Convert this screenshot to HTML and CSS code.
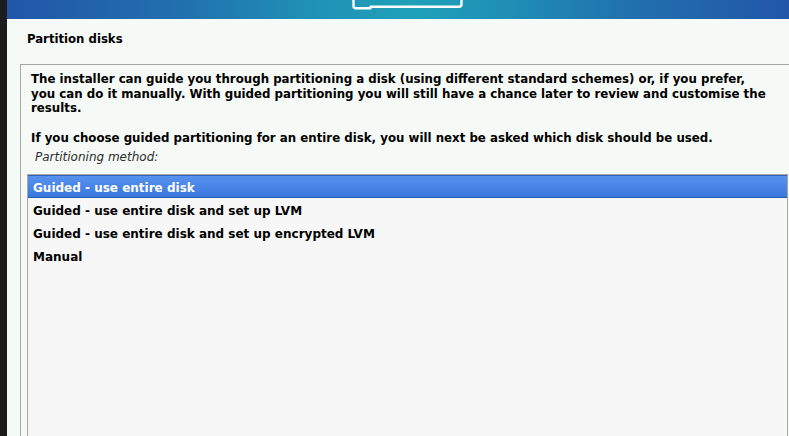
FILE: index.html
```html
<!DOCTYPE html>
<html lang="en">
<head>
<meta charset="utf-8">
<title>Partition disks</title>
<link rel="stylesheet" href="styles.css">
</head>
<body>
<div class="screen">
  <div class="strip"></div>
  <main class="installer">
    <header class="banner">
      <svg class="logo" viewBox="0 0 112 12" width="112" height="12" aria-hidden="true">
        <path d="M1.5 0 V6 Q1.5 8.2 3.7 8.2 H18.5 V6.7 H107 Q109.5 6.7 109.5 4.5 V0" fill="none" stroke="#ffffff" stroke-width="2.4" stroke-linejoin="round"/>
      </svg>
    </header>
    <h1 class="title">Partition disks</h1>
    <section class="frame">
      <div class="desc">
        <p>The installer can guide you through partitioning a disk (using different standard schemes) or, if you prefer,<br>you can do it manually. With guided partitioning you will still have a chance later to review and customise the<br>results.</p>
        <p>If you choose guided partitioning for an entire disk, you will next be asked which disk should be used.</p>
      </div>
      <div class="label">Partitioning method:</div>
      <ul class="listbox">
        <li class="item sel">Guided - use entire disk</li>
        <li class="item">Guided - use entire disk and set up LVM</li>
        <li class="item">Guided - use entire disk and set up encrypted LVM</li>
        <li class="item">Manual</li>
      </ul>
    </section>
  </main>
</div>
</body>
</html>
```
FILE: styles.css
```css
html, body {
  margin: 0;
  height: 100%;
  overflow: hidden;
}
body {
  background: #1c1c1c;
  font-family: "DejaVu Sans", sans-serif;
  color: #000;
}
.screen {
  display: flex;
  height: 436px;
}
.strip {
  width: 7px;
  flex: none;
  background: #1c1c1c;
}
.installer {
  flex: 1;
  min-width: 0;
  background: #f5faf6;
  display: flex;
  flex-direction: column;
  overflow: hidden;
}
.banner {
  height: 19px;
  flex: none;
  background: linear-gradient(to right, #2256a8 0%, #2170ae 22%, #1f93b6 40%, #1fa1b9 52%, #1f8fb5 64%, #2170ae 80%, #2256a8 100%);
}
.logo {
  display: block;
  margin-left: 345px;
}
.title {
  margin: 0;
  padding: 12px 0 0 20px;
  font-family: "DejaVu Sans Condensed", "DejaVu Sans", sans-serif;
  font-stretch: condensed;
  font-weight: bold;
  font-size: 13px;
  line-height: 16px;
  flex: none;
}
.frame {
  margin: 17px -20px 0 13px;
  border-top: 1px solid #a6a6a6;
  border-left: 1px solid #a6a6a6;
  padding: 7px 0 0 6px;
  flex: 1;
  min-height: 0;
  display: flex;
  flex-direction: column;
}
.desc {
  padding-left: 4px;
  font-weight: bold;
  font-size: 11.8px;
  line-height: 14.5px;
  white-space: nowrap;
}
.desc p {
  margin: 0;
}
.desc p + p {
  margin-top: 15px;
}
.label {
  margin: 5px 0 0 8px;
  font-style: italic;
  font-size: 12px;
  line-height: 14px;
  color: #2e2e2e;
}
.listbox {
  list-style: none;
  margin: 10px 21px -12px 0;
  padding: 0;
  border: 1px solid #a9a9a9;
  background: #f7f7f7;
  flex: 1;
}
.item {
  box-sizing: border-box;
  height: 23px;
  padding: 3px 0 0 5px;
  line-height: 20px;
  font-weight: bold;
  font-size: 12px;
  white-space: nowrap;
}
.item.sel {
  background: linear-gradient(#5693ee, #3a77df);
  border-top: 1px solid #3263bd;
  border-bottom: 1px solid #2a5ab0;
  line-height: 18px;
  color: #fff;
}
```
